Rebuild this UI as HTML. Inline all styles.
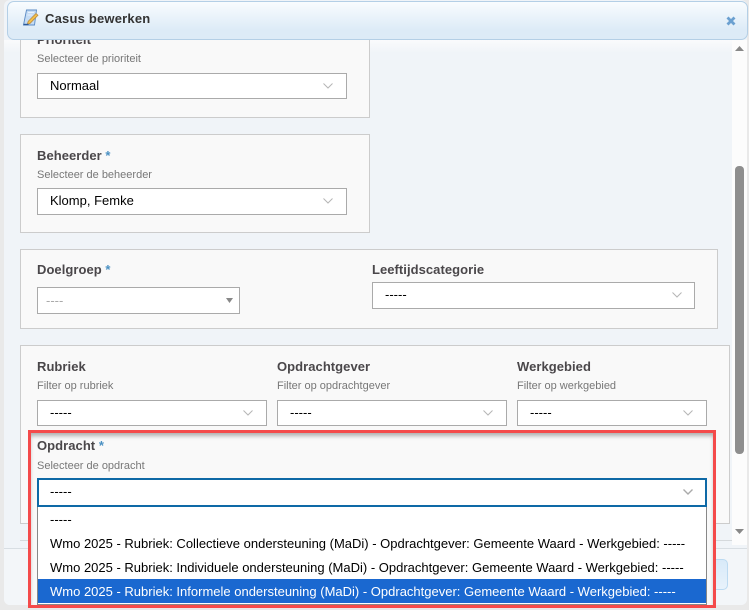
<!DOCTYPE html>
<html>
<head>
<meta charset="utf-8">
<style>
html,body{margin:0;padding:0}
body{width:749px;height:610px;overflow:hidden;position:relative;background:#e9e9e9;font-family:"Liberation Sans",Arial,sans-serif;color:#000}
div,svg{position:absolute;box-sizing:border-box}
#dlg{left:4px;top:0;width:743px;height:605px;background:#f0f4f8;border-radius:6px}
#foot{left:4px;top:548px;width:743px;height:57px;background:#f3f6f9;border-top:1px solid #d8dee3;border-radius:0 0 6px 6px}
#hdr{left:7px;top:1px;width:741px;height:39px;border:1px solid #b4cfe6;border-radius:7px;background:linear-gradient(#f9fcfe,#ddebf7 75%);z-index:5}
#hdrt{left:45px;top:11px;font-size:13px;font-weight:bold;color:#333;letter-spacing:.2px;z-index:6;white-space:nowrap;line-height:15px}
.box{background:#f9f9f9;border:1px solid #ccc}
.lb{font-size:13px;font-weight:bold;color:#4a474a;letter-spacing:.05px;white-space:nowrap;line-height:15px}
.lb span{color:#4a90c2}
.hp{font-size:11px;color:#777;white-space:nowrap;line-height:12px}
.sel{background:#fff;border:1px solid #aaa;font-size:13px;line-height:24px;padding-left:12px;white-space:nowrap}
.ch{width:10px;height:6px;overflow:visible}
.opt{left:38px;width:668px;height:24px;font-size:13px;line-height:24px;padding-left:12px;white-space:nowrap;background:#fff}
</style>
</head>
<body>
<div id="dlg"></div>
<div style="left:4px;top:40px;width:728px;height:13px;background:linear-gradient(#fafbfc,#f0f4f8)"></div>

<div class="box" style="left:20px;top:20px;width:350px;height:98px"></div>
<div class="lb" style="left:37px;top:32px">Prioriteit</div>
<div class="hp" style="left:37px;top:53px">Selecteer de prioriteit</div>
<div class="sel" style="left:37px;top:73px;width:310px;height:26px">Normaal</div>
<svg class="ch" style="left:323px;top:83px" viewBox="0 0 10 6"><path d="M.5.500L5 5 9.500.500" fill="none" stroke="#b5b5b5" stroke-width="1"/></svg>

<div class="box" style="left:20px;top:134px;width:350px;height:99px"></div>
<div class="lb" style="left:37px;top:148px">Beheerder <span>*</span></div>
<div class="hp" style="left:37px;top:169px">Selecteer de beheerder</div>
<div class="sel" style="left:37px;top:188px;width:310px;height:27px">Klomp, Femke</div>
<svg class="ch" style="left:323px;top:198px" viewBox="0 0 10 6"><path d="M.5.500L5 5 9.500.500" fill="none" stroke="#b5b5b5" stroke-width="1"/></svg>

<div class="box" style="left:20px;top:249px;width:698px;height:80px"></div>
<div class="lb" style="left:37px;top:262px">Doelgroep <span>*</span></div>
<div class="sel" style="left:37px;top:287px;width:203px;height:27px;color:#aaa;line-height:26px;padding-left:8px">----</div>
<svg style="left:226px;top:298px;width:7px;height:5px" viewBox="0 0 7 5"><path d="M0 0h7L3.500 5z" fill="#888"/></svg>
<div class="lb" style="left:372px;top:262px">Leeftijdscategorie</div>
<div class="sel" style="left:372px;top:282px;width:323px;height:27px">-----</div>
<svg class="ch" style="left:672px;top:292px" viewBox="0 0 10 6"><path d="M.5.500L5 5 9.500.500" fill="none" stroke="#b5b5b5" stroke-width="1"/></svg>

<div class="box" style="left:20px;top:345px;width:710px;height:179px"></div>
<div class="lb" style="left:37px;top:359px">Rubriek</div>
<div class="hp" style="left:37px;top:380px">Filter op rubriek</div>
<div class="sel" style="left:37px;top:400px;width:230px;height:26px">-----</div>
<svg class="ch" style="left:243px;top:410px" viewBox="0 0 10 6"><path d="M.5.500L5 5 9.500.500" fill="none" stroke="#b5b5b5" stroke-width="1"/></svg>
<div class="lb" style="left:277px;top:359px">Opdrachtgever</div>
<div class="hp" style="left:277px;top:380px">Filter op opdrachtgever</div>
<div class="sel" style="left:277px;top:400px;width:230px;height:26px">-----</div>
<svg class="ch" style="left:483px;top:410px" viewBox="0 0 10 6"><path d="M.5.500L5 5 9.500.500" fill="none" stroke="#b5b5b5" stroke-width="1"/></svg>
<div class="lb" style="left:517px;top:359px">Werkgebied</div>
<div class="hp" style="left:517px;top:380px">Filter op werkgebied</div>
<div class="sel" style="left:517px;top:400px;width:190px;height:26px">-----</div>
<svg class="ch" style="left:683px;top:410px" viewBox="0 0 10 6"><path d="M.5.500L5 5 9.500.500" fill="none" stroke="#b5b5b5" stroke-width="1"/></svg>

<div id="foot"></div>
<div style="left:20px;top:540px;width:712px;height:1px;background:#d5d9dc"></div>
<div style="left:690px;top:559px;width:38px;height:31px;border:1px solid #bcdaf1;border-radius:5px;background:linear-gradient(#d8eaf9,#e8f2fb)"></div>

<div style="left:732px;top:40px;width:15px;height:505px;background:#fcfcfc"></div>
<svg style="left:735px;top:46px;width:9px;height:6px" viewBox="0 0 9 6"><path d="M4.500 0L9 5H0z" fill="#888"/></svg>
<div style="left:735px;top:166px;width:9px;height:288px;background:#8e8e8e;border-radius:4px"></div>
<svg style="left:735px;top:529px;width:9px;height:6px" viewBox="0 0 9 6"><path d="M0 0h9L4.500 5z" fill="#888"/></svg>

<div id="hdr"></div>
<svg style="left:22px;top:9px;width:17px;height:17px;z-index:6" viewBox="0 0 17 17">
<path d="M4.500 1h10L12.500 16H1.500z" fill="#c5dcf4" stroke="#5a8ac4" stroke-width=".9"/>
<path d="M6 3.500h6M5.500 6h5" stroke="#e8f1fb" stroke-width="1"/>
<path d="M14 4.500l2 1.800-7.800 8-3 1.200 1-3.200z" fill="#f2bf4a" stroke="#b5843a" stroke-width=".7"/>
<path d="M1.500 15.500h5" stroke="#2c5a9a" stroke-width="1.400"/>
</svg>
<div id="hdrt">Casus bewerken</div>
<svg style="left:726px;top:16px;width:10px;height:10px;z-index:6" viewBox="0 0 10 10"><path d="M1.500 1.500l7 7M8.500 1.500l-7 7" stroke="#6ba0d0" stroke-width="2.800"/></svg>

<div style="left:31px;top:433px;width:682px;height:172px;background:#f9f9f9;box-shadow:inset 0 4px 4px -1px #b0b0b0"></div>
<div class="lb" style="left:37px;top:438px">Opdracht <span>*</span></div>
<div class="hp" style="left:37px;top:460px">Selecteer de opdracht</div>
<div class="sel" style="left:37px;top:478px;width:670px;height:29px;border:2px solid #0e69a6;padding-left:11px;line-height:24px">-----</div>
<svg class="ch" style="left:683px;top:489px" viewBox="0 0 10 6"><path d="M.5.500L5 5 9.500.500" fill="none" stroke="#aaa" stroke-width="1.400"/></svg>

<div style="left:37px;top:507px;width:670px;height:98px;background:#fff;border:1px solid #888;border-top:0"></div>
<div class="opt" style="top:508px">-----</div>
<div class="opt" style="top:532px">Wmo 2025 - Rubriek: Collectieve ondersteuning (MaDi) - Opdrachtgever: Gemeente Waard - Werkgebied: -----</div>
<div class="opt" style="top:556px;height:23px">Wmo 2025 - Rubriek: Individuele ondersteuning (MaDi) - Opdrachtgever: Gemeente Waard - Werkgebied: -----</div>
<div class="opt" style="top:579px;background:#1a68d0;color:#fff;line-height:25px">Wmo 2025 - Rubriek: Informele ondersteuning (MaDi) - Opdrachtgever: Gemeente Waard - Werkgebied: -----</div>

<div style="left:28px;top:430px;width:688px;height:178px;border:3px solid #f44a4a"></div>
</body>
</html>
